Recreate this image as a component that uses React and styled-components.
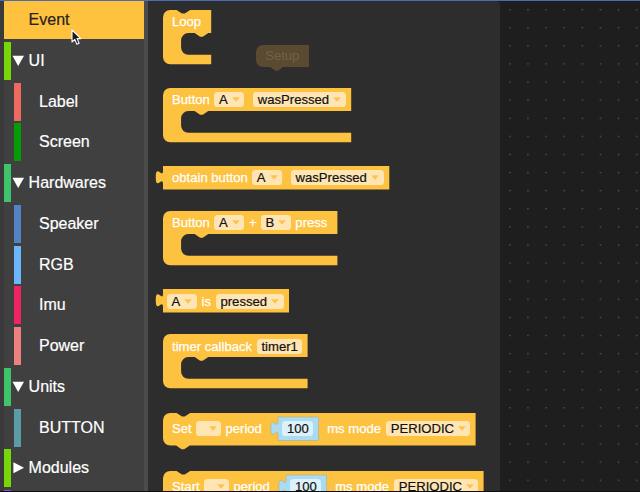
import React from "react";
import styled, { createGlobalStyle } from "styled-components";

const UNIT = 0.905;

const GlobalStyle = createGlobalStyle`
  body {
    margin: 0;
    overflow: hidden;
    background: #1e1e1e;
    font-family: "Liberation Sans", Arial, sans-serif;
  }
`;

const Page = styled.div`
  box-sizing: border-box;
  position: relative;
  display: flex;
  width: 640px;
  height: 492px;
  overflow: hidden;
  border-top: 1px solid #4a6cb0;
  border-bottom: 1px solid #0e0e0e;
  background: #1e1e1e;
`;

const Toolbox = styled.nav`
  box-sizing: border-box;
  display: flex;
  flex: none;
  flex-direction: column;
  gap: 2.75px;
  width: 148px;
  padding-left: 4px;
  overflow: hidden;
  background: #404040;
  border-right: 4px solid #4b4b4b;
  box-shadow: inset 4px 0 #3a3a3b;
`;

const Category = styled.div`
  box-sizing: border-box;
  display: flex;
  flex: none;
  align-items: center;
  height: 38px;
  margin-left: ${(p) => (p.$nested ? 10.4 : 0)}px;
  border-left: 7.4px solid ${(p) => p.$color};
  background: ${(p) => (p.$active ? p.$color : "transparent")};
  color: ${(p) => (p.$active ? "#262320" : "#fff")};
  font-size: 16px;
  line-height: 20px;
  white-space: nowrap;
  -webkit-text-stroke: 0.2px currentColor;
`;

const ArrowSlot = styled.span`
  display: flex;
  width: 17.6px;
  padding-left: 1px;
  box-sizing: border-box;
`;

const Flyout = styled.section`
  box-sizing: border-box;
  position: relative;
  flex: none;
  width: 352px;
  padding: 8.8px 0 0 15px;
  overflow: hidden;
  background: #2d2d2d;
  border-top-right-radius: 4px;
`;

const Workspace = styled.main`
  flex: 1;
  overflow: hidden;
`;

const BlockBox = styled.div`
  position: relative;
  width: ${(p) => p.$width}px;
  height: ${(p) => p.$height}px;
  margin-bottom: ${(p) => p.$after}px;
`;

const Shape = styled.svg`
  position: absolute;
  left: 0;
  top: 0;
  overflow: visible;
`;

const Fields = styled.div`
  position: relative;
  display: flex;
  align-items: center;
  height: 23px;
  padding-top: ${(p) => p.$top}px;
`;

const Label = styled.span`
  flex: none;
  width: ${(p) => p.$width}px;
  margin-left: ${(p) => p.$gap}px;
  color: #fff;
  font-size: 13.1px;
  line-height: 15px;
  white-space: nowrap;
  -webkit-text-stroke: 0.25px #fff;
`;

const Input = styled.span`
  box-sizing: border-box;
  display: flex;
  flex: none;
  align-items: center;
  justify-content: space-between;
  width: ${(p) => p.$width}px;
  height: 15px;
  margin-left: ${(p) => p.$gap}px;
  padding: 0 4.5px 0 4.8px;
  border-radius: 3.6px;
  background: ${(p) => p.$fill || "#fee5b3"};
  color: #111;
  font-size: 13.1px;
  line-height: 15px;
  white-space: nowrap;
  -webkit-text-stroke: 0.2px #111;
`;

const Caret = styled.svg`
  flex: none;
  margin-left: auto;
`;

const ValueBox = styled.span`
  position: relative;
  display: flex;
  flex: none;
  align-items: center;
  width: 40.5px;
  height: 23.5px;
  margin-left: ${(p) => p.$gap}px;
`;

const Ghost = styled.div`
  position: absolute;
  left: 108.2px;
  top: 44.3px;
  width: 53px;
  height: 22px;
`;

const GhostText = styled.span`
  position: relative;
  display: block;
  padding-left: 9px;
  color: #756044;
  font-size: 13.1px;
  line-height: 22px;
`;

const Pointer = styled.svg`
  position: absolute;
  left: 71px;
  top: 28px;
`;

const TAB = "V 20 c 0,-10 -8,8 -8,-7.5 s 8,2.5 8,-7.5 Z";

function outline(kind, w) {
  const top = "m 0,8 A 8,8 0 0,1 8,0";
  const notch = "H 15 l 6,4 3,0 6,-4";
  if (kind === "value") return `M 0,0 H ${w} v 26 H 0 ${TAB}`;
  if (kind === "statement")
    return `${top} ${notch} H ${w} v 36 H 29.5 l -6,4 -3,0 -6,-4 H 8 a 8,8 0 0,1 -8,-8 z`;
  return `${top} ${kind === "loop" ? notch : ""} H ${w} v 25.5 H 50 l -6,4 -3,0 -6,-4 h -7 a 8,8 0 0,0 -8,8 v 8 a 8,8 0 0,0 8,8 H ${w} v 10.5 H 8 a 8,8 0 0,1 -8,-8 z`;
}

function Block({ kind, width, children }) {
  const height = { value: 23.5, statement: 32.6 }[kind] || 54.3;
  const after = { value: 21.7, statement: 25.8 }[kind] || 23.8;
  return (
    <BlockBox $width={width} $height={height} $after={after}>
      <Shape width={width} height={height}>
        <path d={outline(kind, width / UNIT)} transform={`scale(${UNIT})`} fill="#fdc23f" />
      </Shape>
      <Fields $top={kind === "statement" ? 4.5 : 0.3}>{children}</Fields>
    </BlockBox>
  );
}

function Dropdown({ text, width, gap }) {
  return (
    <Input $width={width} $gap={gap}>
      {text}
      <Caret width="8" height="5" viewBox="0 0 8 5">
        <path d="M0.2 0.3H7.8L4 4.8Z" fill="#fdc44c" />
      </Caret>
    </Input>
  );
}

const Digits = styled(Input)`
  position: relative;
  justify-content: center;
`;

function NumberValue({ gap }) {
  return (
    <ValueBox $gap={gap}>
      <Shape width="40.5" height="23.5">
        <path
          d={`M 0,0 H 44.75 v 26 H 0 ${TAB}`}
          transform={`scale(${UNIT})`}
          fill="#a9dcf3"
          stroke="#b3b99a"
          strokeWidth="1"
        />
      </Shape>
      <Digits $width={31} $gap={4.7} $fill="#ddf1fa">
        100
      </Digits>
    </ValueBox>
  );
}

function TimerBlock({ action, actionWidth, width }) {
  return (
    <Block kind="statement" width={width}>
      <Label $gap={9} $width={actionWidth}>{action}</Label>
      <Dropdown text="" width={25} gap={0} />
      <Label $gap={4.5} $width={39}>period</Label>
      <NumberValue gap={13} />
      <Label $gap={9.2} $width={58.8}>ms mode</Label>
      <Dropdown text="PERIODIC" width={84.3} gap={0} />
    </Block>
  );
}

const categories = [
  { name: "Event", color: "#fec23f", active: true },
  { name: "UI", color: "#76d709", open: true },
  { name: "Label", color: "#ee6a5f", nested: true },
  { name: "Screen", color: "#059c08", nested: true },
  { name: "Hardwares", color: "#3ec56c", open: true },
  { name: "Speaker", color: "#5283c4", nested: true },
  { name: "RGB", color: "#6ab8fb", nested: true },
  { name: "Imu", color: "#ee2560", nested: true },
  { name: "Power", color: "#ee8080", nested: true },
  { name: "Units", color: "#3ec56c", open: true },
  { name: "BUTTON", color: "#5c9ca6", nested: true },
  { name: "Modules", color: "#76d709", closed: true },
  { name: "", color: "#7c5cc4" },
];

export default function App() {
  return (
    <>
      <GlobalStyle />
      <Page>
        <Toolbox>
          {categories.map((c, i) => (
            <Category key={i} $color={c.color} $nested={c.nested} $active={c.active}>
              <ArrowSlot>
                {(c.open || c.closed) && (
                  <svg width="13" height="12" viewBox="0 0 13 12">
                    <path d={c.open ? "M0.5 0.7H12L6.2 11Z" : "M1.4 0.3L12 5.8L1.4 11.3Z"} fill="#fff" />
                  </svg>
                )}
              </ArrowSlot>
              {c.name}
            </Category>
          ))}
        </Toolbox>
        <Flyout>
          <Ghost>
            <Shape width="53" height="22">
              <path d="M0 7A7 7 0 0 1 7 0H53V22H27L22 25.8H19.5L14 22H7A7 7 0 0 1 0 15Z" fill="#5a4a32" />
            </Shape>
            <GhostText>Setup</GhostText>
          </Ghost>
          <Block kind="loop" width={48.2}>
            <Label $gap={9} $width={30}>Loop</Label>
          </Block>
          <Block kind="event" width={188.2}>
            <Label $gap={9} $width={42.3}>Button</Label>
            <Dropdown text="A" width={30.2} gap={0} />
            <Dropdown text="wasPressed" width={93} gap={8.5} />
          </Block>
          <Block kind="value" width={226.3}>
            <Label $gap={9} $width={80}>obtain button</Label>
            <Dropdown text="A" width={30.2} gap={0} />
            <Dropdown text="wasPressed" width={93} gap={8.6} />
          </Block>
          <Block kind="event" width={174.4}>
            <Label $gap={9} $width={42.3}>Button</Label>
            <Dropdown text="A" width={30.2} gap={0} />
            <Label $gap={4.5} $width={11.7}>+</Label>
            <Dropdown text="B" width={30.2} gap={0} />
            <Label $gap={4.5} $width={34}>press</Label>
          </Block>
          <Block kind="value" width={126}>
            <Dropdown text="A" width={30.2} gap={3.8} />
            <Label $gap={4.5} $width={14.2}>is</Label>
            <Dropdown text="pressed" width={68.3} gap={0} />
          </Block>
          <Block kind="event" width={144.6}>
            <Label $gap={9} $width={84.7}>timer callback</Label>
            <Input $width={45.6} $gap={0}>timer1</Input>
          </Block>
          <TimerBlock action="Set" actionWidth={24} width={312.6} />
          <TimerBlock action="Start" actionWidth={32} width={320.6} />
        </Flyout>
        <Workspace>
          <svg width="140" height="490" display="block">
            <defs>
              <pattern id="dots" x="9.2" y="8" width="18.1" height="18.1" patternUnits="userSpaceOnUse">
                <rect width="1.4" height="1.3" fill="#585858" />
              </pattern>
            </defs>
            <rect width="140" height="490" fill="url(#dots)" />
          </svg>
        </Workspace>
        <Pointer width="11" height="17" viewBox="0 0 11 17">
          <path
            d="M1 1V13L3.8 10.4L5.8 15.3L8.1 14.3L6.1 9.6H9.8Z"
            fill="#1b1b1b"
            stroke="#fff"
            strokeWidth="1.1"
            strokeLinejoin="round"
          />
        </Pointer>
      </Page>
    </>
  );
}
